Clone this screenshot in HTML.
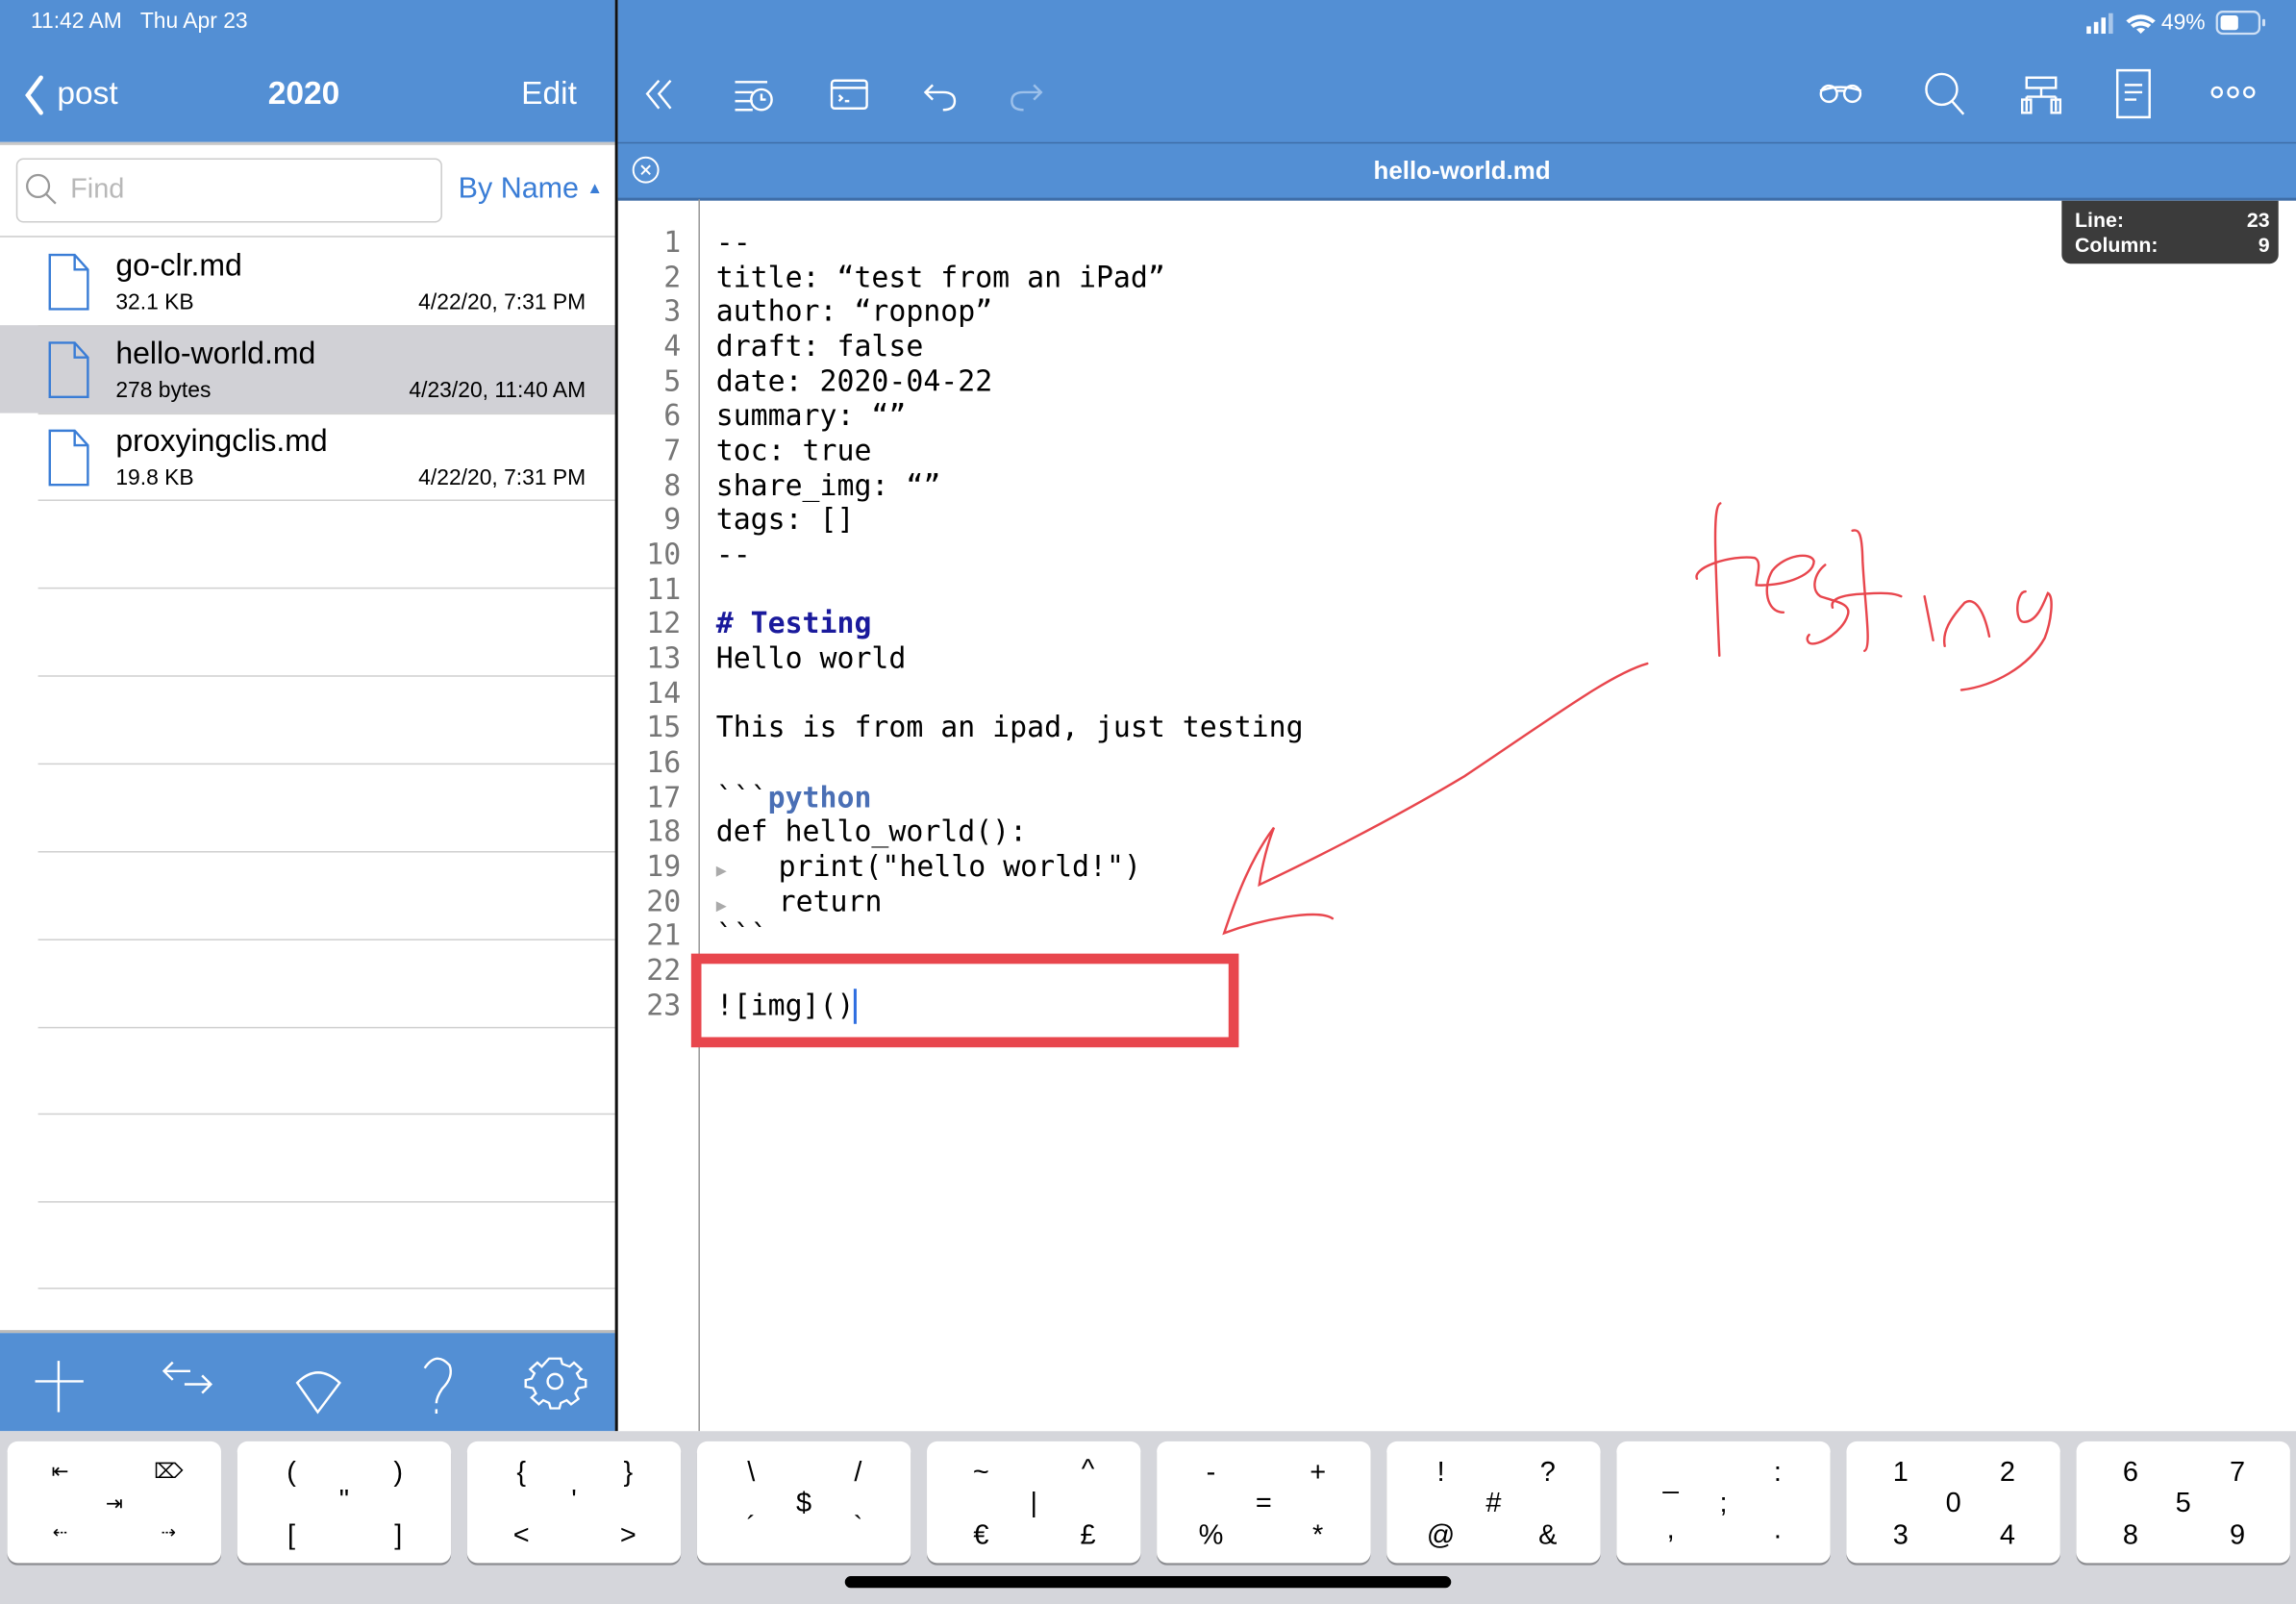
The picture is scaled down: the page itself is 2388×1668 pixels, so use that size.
<!DOCTYPE html>
<html><head><meta charset="utf-8"><style>
html,body{margin:0;padding:0;width:2388px;height:1668px;overflow:hidden;background:#fff}
#w{position:absolute;left:0;top:0;width:1568px;height:1095px;transform:scale(1.52296,1.52329);transform-origin:0 0;font-family:"Liberation Sans",sans-serif;overflow:hidden}
.a{position:absolute}
.blue{background:#538fd4}
.wt{color:#fff}
.mono{font-family:"DejaVu Sans Mono","Liberation Mono",monospace;font-size:19.6px}
.ln{position:absolute;left:422px;width:43px;text-align:right;color:#777}
.cl{position:absolute;left:489px;color:#000;white-space:pre}
.sep{position:absolute;left:26px;right:0;height:1px;background:#d0d0d0}
.key{position:absolute;top:984px;width:146px;height:83px;background:#fff;border-radius:7px;box-shadow:0 1.5px 0 #8c8d91;font-size:19px;color:#000}
.key span{position:absolute;transform:translateX(-50%)}
</style></head><body><div id="w">
<div class="a blue" style="left:0;top:0;width:420px;height:97px"></div>
<div class="a wt" style="left:21px;top:6px;font-size:15px">11:42 AM&nbsp;&nbsp;&nbsp;Thu Apr 23</div>
<svg class="a" style="left:14px;top:50px" width="22" height="30"><path d="M14 3 L5 15 L14 27" stroke="#fff" stroke-width="3" fill="none" stroke-linecap="round"/></svg>
<div class="a wt" style="left:39px;top:51px;font-size:22px">post</div>
<div class="a wt" style="left:183px;top:51px;font-size:22px;font-weight:bold">2020</div>
<div class="a wt" style="left:356px;top:51px;font-size:22px">Edit</div>
<div class="a" style="left:0;top:97px;width:420px;height:2px;background:#c8c8c8"></div>
<div class="a" style="left:11px;top:108px;width:289px;height:42px;border:1.5px solid #ccc;border-radius:5px"></div>
<svg class="a" style="left:16px;top:117px" width="26" height="26"><circle cx="10" cy="10" r="7.5" stroke="#999" stroke-width="1.5" fill="none"/><path d="M15.5 15.5 L22 22" stroke="#999" stroke-width="1.5"/></svg>
<div class="a" style="left:48px;top:119px;font-size:19px;color:#b8b8b8">Find</div>
<div class="a" style="left:313px;top:118px;font-size:20px;color:#3a7dd6">By Name <span style="font-size:11px;vertical-align:3px">▲</span></div>
<div class="a" style="left:0;top:161px;width:420px;height:1px;background:#ccc"></div>
<div class="a" style="left:0;top:222px;width:420px;height:60px;background:#d1d1d6"></div>
<div class="sep" style="top:222px;width:394px"></div>
<div class="sep" style="top:282px;width:394px"></div>
<div class="sep" style="top:341px;width:394px"></div>
<div class="sep" style="top:401px;width:394px"></div>
<div class="sep" style="top:461px;width:394px"></div>
<div class="sep" style="top:521px;width:394px"></div>
<div class="sep" style="top:581px;width:394px"></div>
<div class="sep" style="top:641px;width:394px"></div>
<div class="sep" style="top:701px;width:394px"></div>
<div class="sep" style="top:760px;width:394px"></div>
<div class="sep" style="top:820px;width:394px"></div>
<div class="sep" style="top:879px;width:394px"></div>
<svg class="a" style="left:32px;top:173px" width="30" height="40"><path d="M2 1 H19 L28 11 V38 H2 Z M19 1 V11 H28" stroke="#3a7dd6" stroke-width="1.6" fill="none"/></svg>
<svg class="a" style="left:32px;top:233px" width="30" height="40"><path d="M2 1 H19 L28 11 V38 H2 Z M19 1 V11 H28" stroke="#3a7dd6" stroke-width="1.6" fill="none"/></svg>
<svg class="a" style="left:32px;top:293px" width="30" height="40"><path d="M2 1 H19 L28 11 V38 H2 Z M19 1 V11 H28" stroke="#3a7dd6" stroke-width="1.6" fill="none"/></svg>
<div class="a" style="left:79px;top:170px;font-size:21px">go-clr.md</div>
<div class="a" style="left:79px;top:198px;font-size:15px">32.1 KB</div>
<div class="a" style="right:1168px;top:198px;font-size:15px">4/22/20, 7:31 PM</div>
<div class="a" style="left:79px;top:230px;font-size:21px">hello-world.md</div>
<div class="a" style="left:79px;top:258px;font-size:15px">278 bytes</div>
<div class="a" style="right:1168px;top:258px;font-size:15px">4/23/20, 11:40 AM</div>
<div class="a" style="left:79px;top:290px;font-size:21px">proxyingclis.md</div>
<div class="a" style="left:79px;top:318px;font-size:15px">19.8 KB</div>
<div class="a" style="right:1168px;top:318px;font-size:15px">4/22/20, 7:31 PM</div>
<div class="a" style="left:0;top:908px;width:420px;height:2px;background:#bbb"></div>
<div class="a blue" style="left:0;top:910px;width:420px;height:67px"></div>
<svg class="a" style="left:0;top:910px" width="420" height="67" fill="none" stroke="#fff" stroke-width="1.6">
<path d="M40 19 V54 M24 33 H57"/>
<path d="M112 26 H130 M118 20 L112 26 L118 32 M126 35 H144 M138 29 L144 35 L138 41"/>
<path d="M203 34 Q217 20 232 34 L217 54 Z"/>
<path d="M290 24 Q298 12 307 22 Q310 30 302 38 Q298 44 298 48 M298 52 V55"/>
<circle cx="379" cy="33" r="5"/>
<path d="M375 20 L383 20 L384 24 L389 26 L392 23 L397 28 L394 31 L396 35 L400 36 L400 41 L395 42 L393 46 L395 50 L390 54 L387 51 L383 53 L382 57 L376 57 L375 53 L371 51 L368 54 L363 49 L366 46 L364 42 L359 41 L359 36 L363 35 L365 31 L362 28 L367 23 L370 26 Z" transform="translate(0,-1) scale(1,0.92)"/>
</svg>
<div class="a" style="left:420px;top:0;width:2px;height:977px;background:#111"></div>
<div class="a blue" style="left:422px;top:0;width:1146px;height:136px"></div>
<div class="a" style="left:422px;top:97px;width:1146px;height:1px;background:#3f6ea8"></div>
<div class="a" style="left:422px;top:135px;width:1146px;height:1.5px;background:#3f6ea8"></div>
<div class="a wt" style="left:1476px;top:7px;font-size:15px">49%</div>
<svg class="a" style="left:1424px;top:8px" width="52" height="16" fill="#fff"><rect x="1" y="10" width="3" height="5"/><rect x="6" y="7" width="3" height="8"/><rect x="11" y="4" width="3" height="11"/><rect x="16" y="1" width="3" height="14" opacity=".5"/><path d="M28 6 Q38 -2 48 6 L46 8 Q38 2 30 8Z M31 9 Q38 4 45 9 L43 11 Q38 8 33 11Z M35 12 L38 15 L41 12 Q38 10 35 12Z"/></svg>
<svg class="a" style="left:1513px;top:7px" width="36" height="18"><rect x="1" y="1" width="29" height="15" rx="4" stroke="#cfe0f5" stroke-width="1.5" fill="none"/><rect x="3.5" y="3.5" width="12" height="10" rx="2" fill="#fff"/><rect x="32" y="6" width="2" height="5" rx="1" fill="#cfe0f5"/></svg>
<svg class="a" style="left:422px;top:40px" width="1146" height="50" fill="none" stroke="#fff" stroke-width="1.6">
<path d="M28 15 L20 24 L28 34 M36 15 L28 24 L36 34"/>
<path d="M80 16 H102 M80 23 H92 M80 29 H92 M80 35 H92"/><circle cx="98" cy="28" r="7"/><path d="M98 24 V28 H101"/>
<rect x="146" y="15" width="24" height="19" rx="2"/><path d="M146 20 H170 M151 25 L153 27 L151 29 M155 29 H158"/>
<path d="M215 18 L210 23 L215 28 M210 23 H222 Q230 23 230 29 Q230 35 222 35"/>
<path stroke="#9cc0ea" d="M284 18 L289 23 L284 28 M289 23 H277 Q269 23 269 29 Q269 35 277 35"/>
<circle cx="827" cy="24" r="5.5"/><circle cx="843" cy="24" r="5.5"/><path d="M821 22 Q835 17 849 22 M832 22 H838"/>
<circle cx="904" cy="21" r="10.5"/><path d="M911 29 L919 38"/>
<rect x="962" y="13" width="20" height="7"/><path d="M972 20 V26 M962 26 H982 M962 26 V36 M982 26 V36"/><rect x="959" y="28" width="6" height="9"/><rect x="979" y="28" width="6" height="9"/>
<path d="M1024 8 H1046 V40 H1024 Z M1029 18 H1041 M1029 23 H1041 M1029 28 H1037"/>
<circle cx="1092" cy="23" r="3.3"/><circle cx="1103" cy="23" r="3.3"/><circle cx="1114" cy="23" r="3.3"/>
</svg>
<svg class="a" style="left:431px;top:106px" width="22" height="22" fill="none" stroke="#fff" stroke-width="1.3"><circle cx="10" cy="10" r="8.5"/><path d="M7 7 L13 13 M13 7 L7 13"/></svg>
<div class="a wt" style="left:938px;top:107px;font-size:17px;font-weight:bold">hello-world.md</div>
<div class="a" style="left:477px;top:136px;width:1px;height:841px;background:#999"></div>
<div class="a" style="left:1408px;top:137px;width:148px;height:43px;background:#3b3b3b;border-radius:0 0 6px 6px;color:#fff;font-size:14px;font-weight:bold">
<div class="a" style="left:9px;top:5px">Line:</div><div class="a" style="right:6px;top:5px">23</div>
<div class="a" style="left:9px;top:22px">Column:</div><div class="a" style="right:6px;top:22px">9</div></div>
<div class="mono">
<div class="ln" style="top:154px">1</div><div class="cl" style="top:154px">--</div>
<div class="ln" style="top:178px">2</div><div class="cl" style="top:178px">title: “test from an iPad”</div>
<div class="ln" style="top:201px">3</div><div class="cl" style="top:201px">author: “ropnop”</div>
<div class="ln" style="top:225px">4</div><div class="cl" style="top:225px">draft: false</div>
<div class="ln" style="top:249px">5</div><div class="cl" style="top:249px">date: 2020-04-22</div>
<div class="ln" style="top:272px">6</div><div class="cl" style="top:272px">summary: “”</div>
<div class="ln" style="top:296px">7</div><div class="cl" style="top:296px">toc: true</div>
<div class="ln" style="top:320px">8</div><div class="cl" style="top:320px">share_img: “”</div>
<div class="ln" style="top:343px">9</div><div class="cl" style="top:343px">tags: []</div>
<div class="ln" style="top:367px">10</div><div class="cl" style="top:367px">--</div>
<div class="ln" style="top:391px">11</div>
<div class="ln" style="top:414px">12</div><div class="cl" style="top:414px;color:#1a1a9c;font-weight:bold"># Testing</div>
<div class="ln" style="top:438px">13</div><div class="cl" style="top:438px">Hello world</div>
<div class="ln" style="top:462px">14</div>
<div class="ln" style="top:485px">15</div><div class="cl" style="top:485px">This is from an ipad, just testing</div>
<div class="ln" style="top:509px">16</div>
<div class="ln" style="top:533px">17</div><div class="cl" style="top:533px">&#96;&#96;&#96;<b style="color:#4a6fb5">python</b></div>
<div class="ln" style="top:556px">18</div><div class="cl" style="top:556px">def hello_world():</div>
<div class="ln" style="top:580px">19</div><div class="cl" style="top:580px"><span style="color:#aaa;font-size:12px">▶</span>   print("hello world!")</div>
<div class="ln" style="top:604px">20</div><div class="cl" style="top:604px"><span style="color:#aaa;font-size:12px">▶</span>   return</div>
<div class="ln" style="top:627px">21</div><div class="cl" style="top:627px">&#96;&#96;&#96;</div>
<div class="ln" style="top:651px">22</div>
<div class="ln" style="top:675px">23</div><div class="cl" style="top:675px">![img]()</div>
</div>
<div class="a" style="left:583px;top:675px;width:2px;height:24px;background:#2f6ee0"></div>
<div class="a" style="left:472px;top:651px;width:360px;height:50px;border:7px solid #e8464d"></div>
<svg class="a" style="left:0;top:0" width="1568" height="1095" fill="none" stroke="#e8464d" stroke-width="1.6" stroke-linecap="round">
<path d="M1125 453 C1100 460 1060 490 1000 530 C950 560 890 590 860 604 C862 590 866 575 870 565 C855 585 845 610 836 637 C860 628 900 620 910 627"/>
<g transform="translate(1116.2,328.3) scale(0.2189)" stroke-width="7.3">
<path d="M268 70 C245 80 250 200 265 545"/>
<path d="M195 305 C180 270 300 230 375 240 C400 250 380 300 380 325"/>
<path d="M380 325 C450 330 560 300 560 250 C550 220 470 230 430 280 C400 330 410 410 465 410"/>
<path d="M595 262 C560 290 550 340 580 360 C620 375 680 380 665 420 C650 470 570 520 545 505 C535 495 540 485 545 480"/>
<path d="M680 155 C700 150 710 160 712 250 C720 400 740 520 718 530"/>
<path d="M618 395 C610 370 640 355 720 352 C780 348 810 350 832 360"/>
<path d="M905 360 L932 497"/>
<path d="M968 515 C960 470 985 430 1030 380 C1060 360 1090 400 1107 485"/>
<path d="M1220 345 C1190 345 1185 440 1215 440 C1260 440 1280 370 1290 350 C1310 360 1300 440 1280 490 C1230 580 1120 640 1020 652"/>
</g></svg>
<div class="a" style="left:0;top:977px;width:1568px;height:118px;background:#d5d6db"></div>
<div class="key" style="left:5px"><span style="left:36px;top:12px;font-size:14px">⇤</span><span style="left:110px;top:12px;font-size:14px">⌦</span><span style="left:73px;top:34px;font-size:14px">⇥</span><span style="left:36px;top:55px;font-size:12px">⇠</span><span style="left:110px;top:55px;font-size:12px">⇢</span></div>
<div class="key" style="left:162px"><span style="left:37px;top:11px">(</span><span style="left:110px;top:11px">)</span><span style="left:73px;top:30px">"</span><span style="left:37px;top:54px">[</span><span style="left:110px;top:54px">]</span></div>
<div class="key" style="left:319px"><span style="left:37px;top:11px">{</span><span style="left:110px;top:11px">}</span><span style="left:73px;top:30px">'</span><span style="left:37px;top:54px">&lt;</span><span style="left:110px;top:54px">&gt;</span></div>
<div class="key" style="left:476px"><span style="left:37px;top:11px">\</span><span style="left:110px;top:11px">/</span><span style="left:73px;top:32px">$</span><span style="left:37px;top:48px">´</span><span style="left:110px;top:48px">&#96;</span></div>
<div class="key" style="left:633px"><span style="left:37px;top:11px">~</span><span style="left:110px;top:9px">^</span><span style="left:73px;top:32px">|</span><span style="left:37px;top:54px">€</span><span style="left:110px;top:54px">£</span></div>
<div class="key" style="left:790px"><span style="left:37px;top:11px">-</span><span style="left:110px;top:11px">+</span><span style="left:73px;top:32px">=</span><span style="left:37px;top:54px">%</span><span style="left:110px;top:54px">*</span></div>
<div class="key" style="left:947px"><span style="left:37px;top:11px">!</span><span style="left:110px;top:11px">?</span><span style="left:73px;top:32px">#</span><span style="left:37px;top:54px">@</span><span style="left:110px;top:54px">&amp;</span></div>
<div class="key" style="left:1104px"><span style="left:37px;top:16px">_</span><span style="left:110px;top:11px">:</span><span style="left:73px;top:32px">;</span><span style="left:37px;top:50px">,</span><span style="left:110px;top:50px">.</span></div>
<div class="key" style="left:1261px"><span style="left:37px;top:11px">1</span><span style="left:110px;top:11px">2</span><span style="left:73px;top:32px">0</span><span style="left:37px;top:54px">3</span><span style="left:110px;top:54px">4</span></div>
<div class="key" style="left:1418px"><span style="left:37px;top:11px">6</span><span style="left:110px;top:11px">7</span><span style="left:73px;top:32px">5</span><span style="left:37px;top:54px">8</span><span style="left:110px;top:54px">9</span></div>
<div class="a" style="left:577px;top:1076px;width:414px;height:8px;border-radius:4px;background:#000"></div>
</div></body></html>
